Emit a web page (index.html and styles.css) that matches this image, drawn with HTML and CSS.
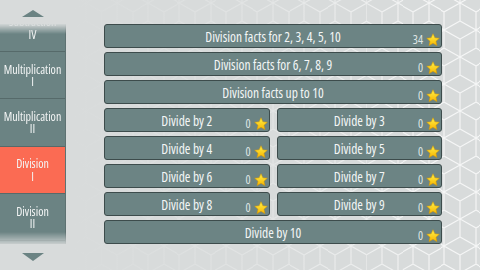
FILE: index.html
```html
<!DOCTYPE html>
<html>
<head>
<meta charset="utf-8">
<link rel="stylesheet" href="styles.css">
</head>
<body>
<div class="screen">
  <aside class="side">
    <div class="arrow up"></div>
    <div class="viewport">
      <div class="list">
        <div class="item"><span>Subtraction</span><span>IV</span></div>
        <div class="item"><span>Multiplication</span><span>I</span></div>
        <div class="item"><span>Multiplication</span><span>II</span></div>
        <div class="item active"><span>Division</span><span>I</span></div>
        <div class="item"><span>Division</span><span>II</span></div>
      </div>
    </div>
    <div class="arrow down"></div>
  </aside>
  <main class="grid">
    <div class="btn full"><span class="title">Division facts for 2, 3, 4, 5, 10</span><span class="score"><span class="num">34</span><svg class="star" viewBox="0 0 24 24"><defs><linearGradient id="s1" x1="0" y1="0" x2="0" y2="1"><stop offset="0" stop-color="#fff34a"/><stop offset="1" stop-color="#f7b400"/></linearGradient></defs><path d="M12 1.2l3.2 7 7.6.8-5.7 5.1 1.6 7.5L12 17.7l-6.7 3.9 1.6-7.5-5.7-5.1 7.6-.8z" fill="url(#s1)" stroke="#d99a00" stroke-width="0.9" stroke-linejoin="round"/></svg></span></div>
    <div class="btn full"><span class="title">Division facts for 6, 7, 8, 9</span><span class="score"><span class="num">0</span><svg class="star" viewBox="0 0 24 24"><defs><linearGradient id="s2" x1="0" y1="0" x2="0" y2="1"><stop offset="0" stop-color="#fff34a"/><stop offset="1" stop-color="#f7b400"/></linearGradient></defs><path d="M12 1.2l3.2 7 7.6.8-5.7 5.1 1.6 7.5L12 17.7l-6.7 3.9 1.6-7.5-5.7-5.1 7.6-.8z" fill="url(#s2)" stroke="#d99a00" stroke-width="0.9" stroke-linejoin="round"/></svg></span></div>
    <div class="btn full"><span class="title">Division facts up to 10</span><span class="score"><span class="num">0</span><svg class="star" viewBox="0 0 24 24"><defs><linearGradient id="s3" x1="0" y1="0" x2="0" y2="1"><stop offset="0" stop-color="#fff34a"/><stop offset="1" stop-color="#f7b400"/></linearGradient></defs><path d="M12 1.2l3.2 7 7.6.8-5.7 5.1 1.6 7.5L12 17.7l-6.7 3.9 1.6-7.5-5.7-5.1 7.6-.8z" fill="url(#s3)" stroke="#d99a00" stroke-width="0.9" stroke-linejoin="round"/></svg></span></div>
    <div class="btn"><span class="title">Divide by 2</span><span class="score"><span class="num">0</span><svg class="star" viewBox="0 0 24 24"><defs><linearGradient id="s4" x1="0" y1="0" x2="0" y2="1"><stop offset="0" stop-color="#fff34a"/><stop offset="1" stop-color="#f7b400"/></linearGradient></defs><path d="M12 1.2l3.2 7 7.6.8-5.7 5.1 1.6 7.5L12 17.7l-6.7 3.9 1.6-7.5-5.7-5.1 7.6-.8z" fill="url(#s4)" stroke="#d99a00" stroke-width="0.9" stroke-linejoin="round"/></svg></span></div>
    <div class="btn"><span class="title">Divide by 3</span><span class="score"><span class="num">0</span><svg class="star" viewBox="0 0 24 24"><defs><linearGradient id="s5" x1="0" y1="0" x2="0" y2="1"><stop offset="0" stop-color="#fff34a"/><stop offset="1" stop-color="#f7b400"/></linearGradient></defs><path d="M12 1.2l3.2 7 7.6.8-5.7 5.1 1.6 7.5L12 17.7l-6.7 3.9 1.6-7.5-5.7-5.1 7.6-.8z" fill="url(#s5)" stroke="#d99a00" stroke-width="0.9" stroke-linejoin="round"/></svg></span></div>
    <div class="btn"><span class="title">Divide by 4</span><span class="score"><span class="num">0</span><svg class="star" viewBox="0 0 24 24"><defs><linearGradient id="s6" x1="0" y1="0" x2="0" y2="1"><stop offset="0" stop-color="#fff34a"/><stop offset="1" stop-color="#f7b400"/></linearGradient></defs><path d="M12 1.2l3.2 7 7.6.8-5.7 5.1 1.6 7.5L12 17.7l-6.7 3.9 1.6-7.5-5.7-5.1 7.6-.8z" fill="url(#s6)" stroke="#d99a00" stroke-width="0.9" stroke-linejoin="round"/></svg></span></div>
    <div class="btn"><span class="title">Divide by 5</span><span class="score"><span class="num">0</span><svg class="star" viewBox="0 0 24 24"><defs><linearGradient id="s7" x1="0" y1="0" x2="0" y2="1"><stop offset="0" stop-color="#fff34a"/><stop offset="1" stop-color="#f7b400"/></linearGradient></defs><path d="M12 1.2l3.2 7 7.6.8-5.7 5.1 1.6 7.5L12 17.7l-6.7 3.9 1.6-7.5-5.7-5.1 7.6-.8z" fill="url(#s7)" stroke="#d99a00" stroke-width="0.9" stroke-linejoin="round"/></svg></span></div>
    <div class="btn"><span class="title">Divide by 6</span><span class="score"><span class="num">0</span><svg class="star" viewBox="0 0 24 24"><defs><linearGradient id="s8" x1="0" y1="0" x2="0" y2="1"><stop offset="0" stop-color="#fff34a"/><stop offset="1" stop-color="#f7b400"/></linearGradient></defs><path d="M12 1.2l3.2 7 7.6.8-5.7 5.1 1.6 7.5L12 17.7l-6.7 3.9 1.6-7.5-5.7-5.1 7.6-.8z" fill="url(#s8)" stroke="#d99a00" stroke-width="0.9" stroke-linejoin="round"/></svg></span></div>
    <div class="btn"><span class="title">Divide by 7</span><span class="score"><span class="num">0</span><svg class="star" viewBox="0 0 24 24"><defs><linearGradient id="s9" x1="0" y1="0" x2="0" y2="1"><stop offset="0" stop-color="#fff34a"/><stop offset="1" stop-color="#f7b400"/></linearGradient></defs><path d="M12 1.2l3.2 7 7.6.8-5.7 5.1 1.6 7.5L12 17.7l-6.7 3.9 1.6-7.5-5.7-5.1 7.6-.8z" fill="url(#s9)" stroke="#d99a00" stroke-width="0.9" stroke-linejoin="round"/></svg></span></div>
    <div class="btn"><span class="title">Divide by 8</span><span class="score"><span class="num">0</span><svg class="star" viewBox="0 0 24 24"><defs><linearGradient id="s10" x1="0" y1="0" x2="0" y2="1"><stop offset="0" stop-color="#fff34a"/><stop offset="1" stop-color="#f7b400"/></linearGradient></defs><path d="M12 1.2l3.2 7 7.6.8-5.7 5.1 1.6 7.5L12 17.7l-6.7 3.9 1.6-7.5-5.7-5.1 7.6-.8z" fill="url(#s10)" stroke="#d99a00" stroke-width="0.9" stroke-linejoin="round"/></svg></span></div>
    <div class="btn"><span class="title">Divide by 9</span><span class="score"><span class="num">0</span><svg class="star" viewBox="0 0 24 24"><defs><linearGradient id="s11" x1="0" y1="0" x2="0" y2="1"><stop offset="0" stop-color="#fff34a"/><stop offset="1" stop-color="#f7b400"/></linearGradient></defs><path d="M12 1.2l3.2 7 7.6.8-5.7 5.1 1.6 7.5L12 17.7l-6.7 3.9 1.6-7.5-5.7-5.1 7.6-.8z" fill="url(#s11)" stroke="#d99a00" stroke-width="0.9" stroke-linejoin="round"/></svg></span></div>
    <div class="btn full"><span class="title">Divide by 10</span><span class="score"><span class="num">0</span><svg class="star" viewBox="0 0 24 24"><defs><linearGradient id="s12" x1="0" y1="0" x2="0" y2="1"><stop offset="0" stop-color="#fff34a"/><stop offset="1" stop-color="#f7b400"/></linearGradient></defs><path d="M12 1.2l3.2 7 7.6.8-5.7 5.1 1.6 7.5L12 17.7l-6.7 3.9 1.6-7.5-5.7-5.1 7.6-.8z" fill="url(#s12)" stroke="#d99a00" stroke-width="0.9" stroke-linejoin="round"/></svg></span></div>
  </main>
</div>
</body>
</html>
```
FILE: styles.css
```css
html, body {
  margin: 0;
  padding: 0;
}
body {
  width: 480px;
  height: 270px;
  overflow: hidden;
  background: #d8dbdb;
  font-family: "Open Sans", "DejaVu Sans Condensed", sans-serif;
  font-stretch: 75%;
}
.screen {
  display: flex;
  width: 480px;
  height: 270px;
  background-color: #d8dbdb;
  background-image:
    linear-gradient(to right, #d8dbdb 15%, rgba(216,219,219,0.65) 55%, rgba(216,219,219,0) 92%),
    url("data:image/svg+xml,%3Csvg xmlns='http://www.w3.org/2000/svg' width='31.18' height='54' viewBox='0 0 31.18 54'%3E%3Cpath d='M15.59 0V9L31.18 18V36L15.59 45V54M15.59 9L0 18V36L15.59 45M15.59 27V9M15.59 27L31.18 36M15.59 27L0 36M0 0L15.59 9M31.18 0L15.59 9M0 54V36M31.18 54V36' fill='none' stroke='%23ffffff' stroke-width='1.1' stroke-opacity='0.75'/%3E%3C/svg%3E");
  background-size: 480px 270px, 31.18px 54px;
  background-repeat: no-repeat, repeat;
  background-position: 0 0, 8px -6px;
}
.side {
  width: 66px;
  flex: none;
  display: flex;
  flex-direction: column;
}
.arrow {
  display: flex;
  justify-content: center;
  align-items: center;
}
.arrow.up {
  height: 24px;
  padding-top: 2px;
  box-sizing: border-box;
}
.arrow.down {
  height: 26px;
}
.arrow.up::before {
  content: "";
  border-left: 11px solid transparent;
  border-right: 11px solid transparent;
  border-bottom: 7px solid #6b8383;
}
.arrow.down::before {
  content: "";
  border-left: 11px solid transparent;
  border-right: 11px solid transparent;
  border-top: 8px solid #6b8383;
}
.viewport {
  height: 220px;
  overflow: hidden;
  background: #6b8383;
  border-right: 1px solid #5e7272;
  -webkit-mask-image: linear-gradient(to bottom, rgba(0,0,0,0.05) 0px, #000 10px, #000 208px, rgba(0,0,0,0.15) 220px);
  mask-image: linear-gradient(to bottom, rgba(0,0,0,0.05) 0px, #000 10px, #000 208px, rgba(0,0,0,0.15) 220px);
}
.list {
  margin-top: -19.33px;
}
.item {
  box-sizing: border-box;
  height: 47.33px;
  border-bottom: 1px solid #566a6a;
  display: flex;
  flex-direction: column;
  justify-content: center;
  align-items: center;
  color: #f3f5f5;
  font-size: 12px;
  line-height: 12.5px;
  padding-top: 2px;
  white-space: nowrap;
}
.item.active {
  background: #fb6b53;
}
.grid {
  margin-left: 38px;
  width: 338px;
  padding-top: 24px;
  display: grid;
  grid-template-columns: 1fr 1fr;
  grid-auto-rows: 24px;
  column-gap: 7px;
  row-gap: 4px;
  align-content: start;
}
.btn {
  box-sizing: border-box;
  height: 24px;
  background: #6c8484;
  border: 1px solid #3d4c4c;
  border-radius: 3px;
  display: grid;
  grid-template-columns: 1fr auto 1fr;
  align-items: center;
  color: #f3f6f6;
  font-size: 13.5px;
  font-stretch: 82%;
}
.btn::before {
  content: "";
}
.btn.full {
  grid-column: 1 / 3;
}
.title {
  white-space: nowrap;
  padding-top: 2px;
}
.score {
  justify-self: end;
  align-self: stretch;
  display: flex;
  align-items: flex-end;
  gap: 3px;
  padding-right: 1px;
}
.num {
  font-size: 12px;
  line-height: 12px;
  color: #dfe6e6;
  padding-bottom: 1px;
  font-stretch: 75%;
}
.star {
  width: 14px;
  height: 14px;
  display: block;
}
```
